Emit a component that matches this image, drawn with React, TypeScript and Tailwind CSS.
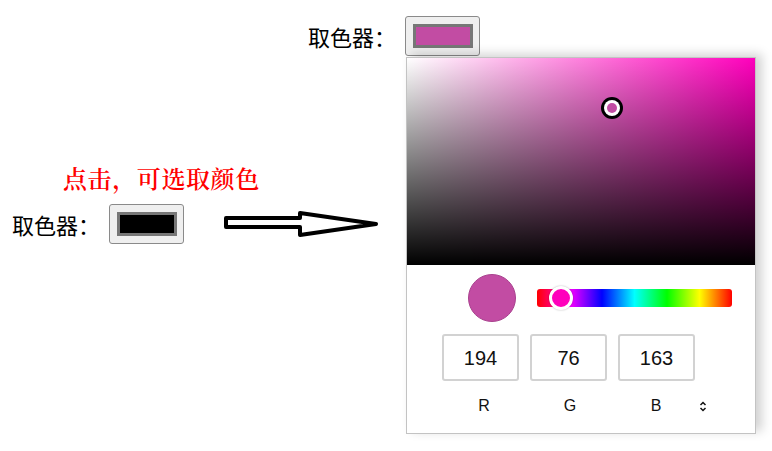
import React from "react";

function ColorButton({ color }: { color: string }) {
  return (
    <div className="w-[75px] h-[40px] rounded-[3px] border border-[#8a8a8a] bg-[#efefef] flex items-center justify-center">
      <div className="w-[60px] h-[24px] border-[3px] border-[#777777]" style={{ background: color }} />
    </div>
  );
}

export default function App() {
  const cjk = "font-['Noto_Sans_CJK_SC','Noto_Sans_CJK_JP',sans-serif]";
  return (
    <div className="relative w-[772px] h-[451px] bg-white overflow-hidden">
      {/* top row */}
      <div className="flex items-center pt-[16px] pl-[308px]">
        <span className={`${cjk} text-[22px] leading-[40px] text-black`}>取色器：</span>
        <div className="ml-[9px]">
          <ColorButton color="#c24ca3" />
        </div>
      </div>

      {/* red hint */}
      <div
        className={`mt-[107px] pl-[63px] text-[24px] leading-[30px] tracking-[0.6px] text-[#ff0000] font-semibold font-['Noto_Serif_CJK_SC','Noto_Sans_CJK_SC',serif]`}
      >
        点击，可选取颜色
      </div>

      {/* left row */}
      <div className="flex items-center mt-[11px] pl-[12px]">
        <span className={`${cjk} text-[22px] leading-[40px] text-black`}>取色器：</span>
        <div className="ml-[9px]">
          <ColorButton color="#000000" />
        </div>
        <svg width="160" height="32" viewBox="0 0 160 32" className="ml-[37px]">
          <polygon
            points="5,10 79,10 79,5 155,16 79,27 79,19 5,19"
            fill="white"
            stroke="black"
            strokeWidth="4"
            strokeLinejoin="round"
          />
        </svg>
      </div>

      {/* popup */}
      <div className="absolute left-[406px] top-[57px] w-[350px] h-[377px] border border-[#c3c3c3] bg-white shadow-[6px_-3px_10px_rgba(0,0,0,0.18)]">
        <div className="relative h-[207px] w-full bg-[linear-gradient(to_top,#000,transparent),linear-gradient(to_right,#fff,#ff00bc)]">
          <div className="absolute left-[194px] top-[39px] w-[22px] h-[22px] rounded-full bg-black p-[3px]">
            <div className="w-full h-full rounded-full bg-white p-[3px]">
              <div className="w-full h-full rounded-full bg-[#c24ca3]" />
            </div>
          </div>
        </div>

        <div className="flex items-center pt-[9px] pl-[61px]">
          <div className="w-[48px] h-[48px] rounded-full bg-[#c24ca3] border border-[#a9418e]" />
          <div className="relative ml-[21px] w-[195px] h-[18px] rounded-[3px] bg-[linear-gradient(to_right,#f00,#f0f,#00f,#0ff,#0f0,#ff0,#f00)]">
            <div className="absolute left-[12px] top-[-3px] w-[24px] h-[24px] rounded-full bg-[#ff00bc] border-[3px] border-white shadow-[0_0_2px_rgba(0,0,0,0.3)]" />
          </div>
        </div>

        <div className="flex gap-[11px] pl-[35px] mt-[12px] font-['Liberation_Sans',Arial,sans-serif]">
          {["194", "76", "163"].map((v) => (
            <div
              key={v}
              className="w-[77px] h-[47px] rounded-[3px] border-2 border-[#d2d2d2] flex items-center justify-center text-[20px] text-[#111]"
            >
              {v}
            </div>
          ))}
        </div>

        <div className="flex items-center pl-[34px] mt-[15px] font-['Liberation_Sans',Arial,sans-serif] text-[16px] leading-[20px] text-[#111]">
          <div className="w-[86px] text-center">R</div>
          <div className="w-[86px] text-center">G</div>
          <div className="w-[86px] text-center">B</div>
          <svg width="8" height="11" viewBox="0 0 8 11">
            <polyline points="1.5,4 4,1.5 6.5,4" fill="none" stroke="#111" strokeWidth="1.5" />
            <polyline points="1.5,7 4,9.5 6.5,7" fill="none" stroke="#111" strokeWidth="1.5" />
          </svg>
        </div>
      </div>
    </div>
  );
}
